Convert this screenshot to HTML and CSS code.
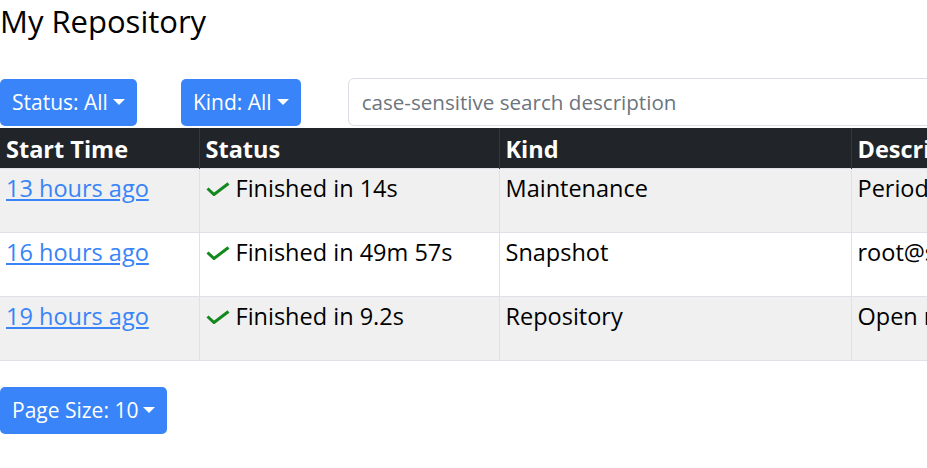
FILE: index.html
```html
<!DOCTYPE html>
<html lang="en">
<head>
    <meta charset="UTF-8">
    <title>My Repository</title>
    <link rel="stylesheet" href="styles.css">
</head>
<body>

    <h1 class="page-title">My Repository</h1>

    <div class="toolbar">
        <button class="btn-drop">Status: All <span class="caret"></span></button>
        <button class="btn-drop">Kind: All <span class="caret"></span></button>
        <input class="search-box" type="text" placeholder="case-sensitive search description">
    </div>

    <div class="table-wrap">
        <table class="task-table">
            <thead>
                <tr>
                    <th class="col-time">Start Time</th>
                    <th class="col-status">Status</th>
                    <th class="col-kind">Kind</th>
                    <th class="col-desc">Description</th>
                </tr>
            </thead>
            <tbody>
                <tr>
                    <td><a href="#">13 hours ago</a></td>
                    <td><svg class="check" viewBox="0 0 24 14"><polyline points="1.5,6.5 8,12.5 22.5,1.5"/></svg>Finished in 14s</td>
                    <td>Maintenance</td>
                    <td>Periodic maintenance</td>
                </tr>
                <tr>
                    <td><a href="#">16 hours ago</a></td>
                    <td><svg class="check" viewBox="0 0 24 14"><polyline points="1.5,6.5 8,12.5 22.5,1.5"/></svg>Finished in 49m 57s</td>
                    <td>Snapshot</td>
                    <td>root@server:/home/data</td>
                </tr>
                <tr>
                    <td><a href="#">19 hours ago</a></td>
                    <td><svg class="check" viewBox="0 0 24 14"><polyline points="1.5,6.5 8,12.5 22.5,1.5"/></svg>Finished in 9.2s</td>
                    <td>Repository</td>
                    <td>Open repository</td>
                </tr>
            </tbody>
        </table>
    </div>

    <div class="pager">
        <button class="btn-drop">Page Size: 10 <span class="caret"></span></button>
    </div>

</body>
</html>
```

FILE: styles.css
```css
* {
    box-sizing: border-box;
}

body, html {
    margin: 0;
    font-family: "Open Sans", "Noto Sans", sans-serif;
    font-size: 23.5px;
    color: #000000;
    background-color: #ffffff;
    overflow: hidden;
}

.page-title {
    font-size: 31px;
    font-weight: 400;
    margin: 0;
    line-height: 42px;
    height: 77px;
}

.toolbar {
    display: flex;
    align-items: center;
    gap: 44px;
    height: 50px;
}

.btn-drop {
    flex-shrink: 0;
    white-space: nowrap;
    font-family: inherit;
    font-size: 21px;
    color: #ffffff;
    background-color: #3884f8;
    border: none;
    border-radius: 5px;
    height: 47px;
    padding: 0 12px;
    display: flex;
    align-items: center;
    gap: 5px;
    cursor: pointer;
}

.caret {
    width: 0;
    height: 0;
    border-left: 6px solid transparent;
    border-right: 6px solid transparent;
    border-top: 6px solid #ffffff;
}

.search-box {
    flex: 1;
    min-width: 620px;
    height: 48px;
    margin-left: 3px;
    font-family: inherit;
    font-size: 20.6px;
    padding: 0 13px;
    border: 1px solid #dadde1;
    border-radius: 6px;
    color: #495057;
}

.search-box::placeholder {
    color: #6c757d;
}

.table-wrap {
    overflow: hidden;
    padding-top: 1px;
}

.task-table {
    border-collapse: collapse;
    table-layout: fixed;
    width: 1100px;
}

.col-time { width: 199px; }
.col-status { width: 300px; }
.col-kind { width: 352px; }
.col-desc { width: 249px; }

.task-table th {
    background-color: #212529;
    color: #ffffff;
    font-weight: 700;
    text-align: left;
    height: 40px;
    padding: 3px 6px 0;
    border-left: 1px solid #32383e;
    white-space: nowrap;
    overflow: hidden;
}

.task-table td {
    height: 64px;
    vertical-align: top;
    padding: 4px 6px 3px;
    line-height: 30px;
    border: 1px solid #dee2e6;
    white-space: nowrap;
    overflow: hidden;
}

.task-table th:first-child,
.task-table td:first-child {
    border-left: none;
}

.task-table tbody tr:nth-child(odd) {
    background-color: #f0f0f0;
}

.task-table a {
    color: #3884f8;
}

.check {
    width: 24px;
    height: 14px;
    margin-right: 6px;
    vertical-align: 1px;
    fill: none;
    stroke: #13881d;
    stroke-width: 3;
}

.pager {
    padding-top: 26px;
}
```
